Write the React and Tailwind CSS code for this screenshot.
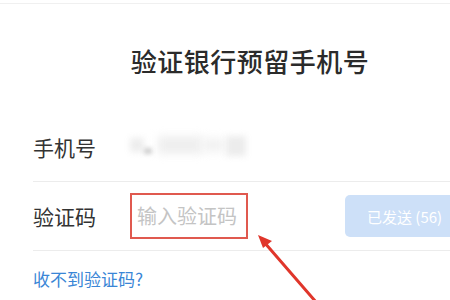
import React from 'react';

const font = { fontFamily: '"Noto Sans CJK SC", "Noto Sans", sans-serif' };

const BlurredPhone = () => (
  <div className="relative h-[24px] w-[120px]">
    <div className="absolute left-[0px] top-[2px] h-[14px] w-[14px] bg-[#ededed] blur-[3px]" />
    <div className="absolute left-[14px] top-[12px] h-[6px] w-[8px] bg-[#cfcfcf] blur-[2px]" />
    <div className="absolute left-[28px] top-[0px] h-[18px] w-[44px] bg-[#efefef] blur-[4px]" />
    <div className="absolute left-[72px] top-[2px] h-[14px] w-[22px] bg-[#f2f2f2] blur-[4px]" />
    <div className="absolute left-[96px] top-[0px] h-[20px] w-[20px] bg-[#ececec] blur-[3px]" />
  </div>
);

export default function App() {
  return (
    <div className="relative w-[450px] h-[300px] overflow-hidden bg-white" style={font}>
      <div className="h-[4px] border-b border-[#f0f0f0]" />

      <div className="h-[110px] flex items-center justify-center pl-[50px] pt-[4px]">
        <h1 className="text-[26px] leading-none font-medium text-[#2b2b2b] tracking-[0.5px]">
          验证银行预留手机号
        </h1>
      </div>

      <div className="pl-[33px]">
        <div className="h-[68px] flex items-center border-b border-[#ececec]">
          <span className="w-[97px] text-[21px] leading-none text-[#333]">手机号</span>
          <BlurredPhone />
        </div>

        <div className="h-[69px] flex items-center border-b border-[#ececec]">
          <span className="w-[97px] text-[21px] leading-none text-[#333]">验证码</span>
          <div className="w-[118px] h-[46px] border-2 border-[#e0594f] flex items-center pl-[5px]">
            <span className="text-[20px] leading-none text-[#c4c4c4]">输入验证码</span>
          </div>
          <div className="ml-auto mr-[-6px] w-[111px] h-[42px] rounded-[5px] bg-[#cde0f8] flex items-center pl-[22px]">
            <span className="text-[15px] leading-none text-white">已发送 (56)</span>
          </div>
        </div>

        <div className="h-[52px] flex items-center pt-[2px]">
          <span className="text-[17px] leading-none text-[#3a86d6]">收不到验证码?</span>
        </div>
      </div>

      <svg className="absolute left-0 top-0 pointer-events-none" width="450" height="300" viewBox="0 0 450 300">
        <line x1="316" y1="302" x2="264" y2="242" stroke="#e0362b" strokeWidth="3" strokeLinecap="round" />
        <polygon points="258,235 272,241 263,248" fill="#e0362b" />
      </svg>
    </div>
  );
}
